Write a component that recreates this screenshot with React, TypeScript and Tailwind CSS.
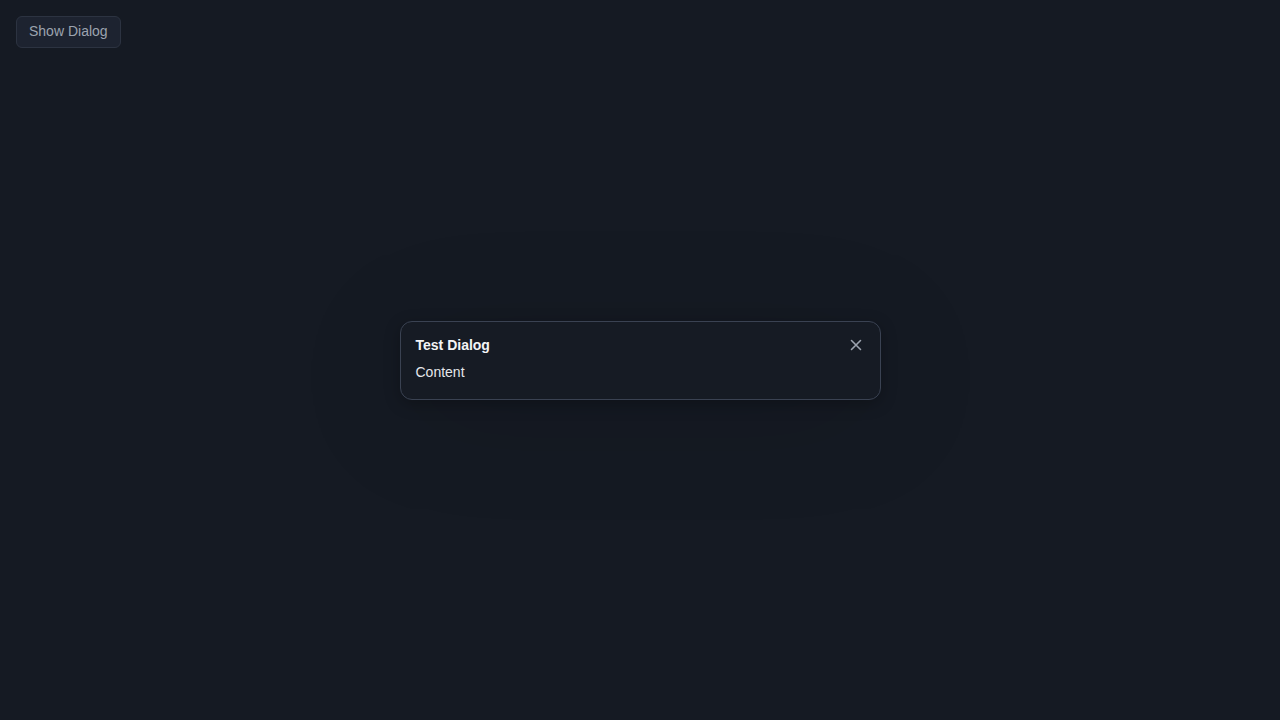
import { useState } from 'react';

export default function App() {
  const [open, setOpen] = useState(true);

  return (
    <div className="relative h-[720px] w-full overflow-hidden bg-[#151a23] font-['Liberation_Sans',Arial,sans-serif]">
      <div className="p-4">
        <button
          type="button"
          onClick={() => setOpen(true)}
          className="rounded-md border border-[#2c3341] bg-[#1d2330] px-3 pb-[6px] pt-[4px] text-sm leading-5 text-[#9ca3af]"
        >
          Show Dialog
        </button>
      </div>

      {open ? (
        <div className="absolute inset-0 flex items-center justify-center">
          <div
            role="dialog"
            className="w-[481px] rounded-xl border border-[#3a4252] bg-[#161b24] px-[15px] pb-[17px] pt-[13px] text-sm leading-5 shadow-[0_4px_16px_rgba(0,0,0,0.25),0_16px_120px_rgba(0,0,0,0.12)]"
          >
            <div className="flex items-center justify-between">
              <h2 className="font-bold text-[#f3f4f6]">Test Dialog</h2>
              <button
                type="button"
                aria-label="Close"
                onClick={() => setOpen(false)}
                className="-mr-[1px] flex h-5 w-5 items-center justify-center text-[#9ca3af]"
              >
                <svg width="12" height="12" viewBox="0 0 12 12" fill="none" stroke="currentColor" strokeWidth="1.6" strokeLinecap="round">
                  <path d="M1.5 1.5l9 9M10.5 1.5l-9 9" />
                </svg>
              </button>
            </div>
            <p className="mt-[7px] text-[#e5e7eb]">Content</p>
          </div>
        </div>
      ) : null}
    </div>
  );
}
